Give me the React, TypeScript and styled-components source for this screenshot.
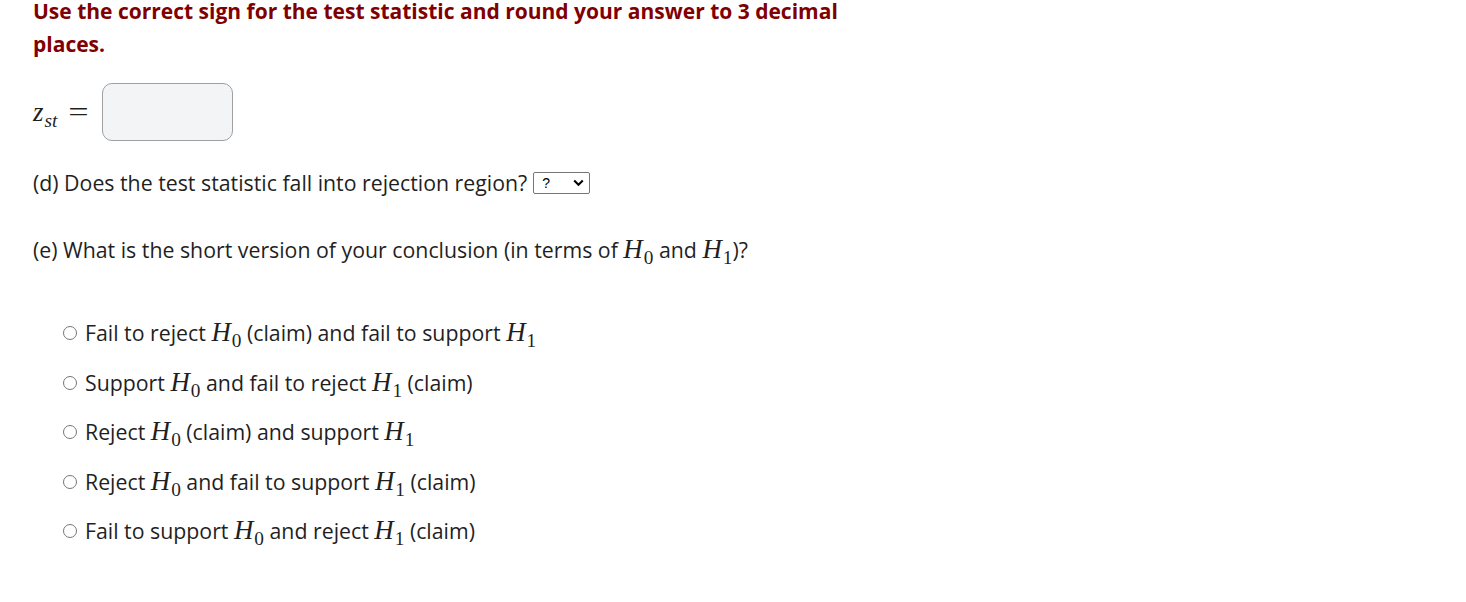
import React from 'react';
import styled, { createGlobalStyle } from 'styled-components';

const GlobalStyle = createGlobalStyle`
	html, body {
		margin: 0;
		padding: 0;
		background: #ffffff;
	}
	body {
		font-family: 'Open Sans', 'Noto Sans', sans-serif;
		color: #1f1f1f;
	}
`;

const Page = styled.div`
	padding: 0 33px;
	font-size: 21.3px;
`;

const Instruction = styled.p`
	margin: -5px 0 0;
	max-width: 860px;
	font-weight: 700;
	font-size: 21px;
	line-height: 33px;
	color: #800000;
`;

const AnswerRow = styled.div`
	display: flex;
	align-items: center;
	gap: 16px;
	margin-top: 22px;
`;

const MathText = styled.span`
	font-family: 'Liberation Serif', 'DejaVu Serif', serif;
	font-size: 1.26em;
	line-height: 1;
	white-space: nowrap;
`;

const Var = styled.i`
	font-style: italic;
`;

const Sub = styled.sub<{ $italic?: boolean }>`
	font-size: 0.72em;
	font-style: ${(p) => (p.$italic ? 'italic' : 'normal')};
	vertical-align: -0.32em;
	line-height: 0;
	margin-left: 1px;
`;

const Equals = styled.span`
	display: inline-block;
	font-family: 'Liberation Serif', 'DejaVu Serif', serif;
	font-size: 1.26em;
	line-height: 1;
	margin-left: 14px;
	transform: scaleX(1.35);
`;

const AnswerInput = styled.input`
	width: 131px;
	height: 58px;
	box-sizing: border-box;
	border: 1px solid #a0a0a0;
	border-radius: 10px;
	background: #f3f4f6;
`;

const Question = styled.p<{ $top: number }>`
	margin: ${(p) => p.$top}px 0 0;
	height: 28px;
	line-height: 28px;
	display: flex;
	align-items: center;
	gap: 6px;
	white-space: nowrap;
`;

const Select = styled.div`
	display: inline-flex;
	align-items: center;
	justify-content: space-between;
	width: 57px;
	height: 22px;
	box-sizing: border-box;
	border: 1px solid #767676;
	border-radius: 2px;
	padding: 0 5px 0 8px;
	font-family: 'Liberation Sans', Arial, sans-serif;
	font-size: 14px;
	color: #000;
	background: #fff;
`;

const Options = styled.ul`
	list-style: none;
	margin: 55px 0 0;
	padding: 0 0 0 30px;
	display: flex;
	flex-direction: column;
	gap: 21.5px;
`;

const Option = styled.li`
	display: flex;
	align-items: center;
	gap: 8px;
	height: 28px;
	line-height: 28px;
	white-space: nowrap;
`;

const Radio = styled.span`
	width: 14px;
	height: 14px;
	box-sizing: border-box;
	border: 1px solid #767676;
	border-radius: 50%;
	flex-shrink: 0;
`;

const H = ({ n }: { n: number }) => (
	<MathText>
		<Var>H</Var>
		<Sub>{n}</Sub>
	</MathText>
);

const Chevron = () => (
	<svg width="11" height="8" viewBox="0 0 11 8">
		<path d="M1.2 1.5 L5.5 5.8 L9.8 1.5" fill="none" stroke="#000" strokeWidth="2" />
	</svg>
);

const options: React.ReactNode[] = [
	<>Fail to reject <H n={0} /> (claim) and fail to support <H n={1} /></>,
	<>Support <H n={0} /> and fail to reject <H n={1} /> (claim)</>,
	<>Reject <H n={0} /> (claim) and support <H n={1} /></>,
	<>Reject <H n={0} /> and fail to support <H n={1} /> (claim)</>,
	<>Fail to support <H n={0} /> and reject <H n={1} /> (claim)</>,
];

export default function App() {
	return (
		<>
			<GlobalStyle />
			<Page>
				<Instruction>
					Use the correct sign for the test statistic and round your answer to 3 decimal places.
				</Instruction>
				<AnswerRow>
					<span>
						<MathText>
							<Var>z</Var>
							<Sub $italic>st</Sub>
						</MathText>
						<Equals>=</Equals>
					</span>
					<AnswerInput />
				</AnswerRow>
				<Question $top={28}>
					(d) Does the test statistic fall into rejection region?
					<Select>
						<span>?</span>
						<Chevron />
					</Select>
				</Question>
				<Question $top={39}>
					<span>
						(e) What is the short version of your conclusion (in terms of <H n={0} /> and <H n={1} />)?
					</span>
				</Question>
				<Options>
					{options.map((content, i) => (
						<Option key={i}>
							<Radio />
							<span>{content}</span>
						</Option>
					))}
				</Options>
			</Page>
		</>
	);
}
